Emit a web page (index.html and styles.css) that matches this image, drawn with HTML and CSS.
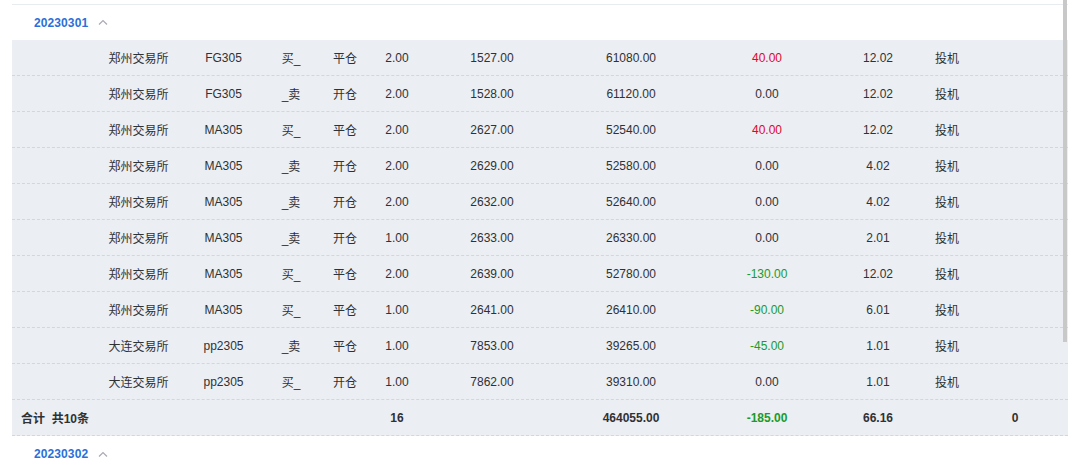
FILE: index.html
```html
<!DOCTYPE html>
<html lang="zh-CN">
<head>
<meta charset="utf-8">
<title>成交明细</title>
<link rel="stylesheet" href="styles.css">
</head>
<body>
<div class="page">
  <div class="panel">
    <div class="group-head first">
      <span class="date">20230301</span>
      <svg class="chev" width="10" height="6" viewBox="0 0 10 6"><path d="M1 5.5 L5 1.5 L9 5.5" fill="none" stroke="#a8abb2" stroke-width="1.2"/></svg>
    </div>
    <div class="table">
      <div class="row"><span></span><span>郑州交易所</span><span>FG305</span><span>买_</span><span>平仓</span><span>2.00</span><span>1527.00</span><span>61080.00</span><span class="red">40.00</span><span>12.02</span><span>投机</span><span></span></div>
      <div class="row"><span></span><span>郑州交易所</span><span>FG305</span><span>_卖</span><span>开仓</span><span>2.00</span><span>1528.00</span><span>61120.00</span><span>0.00</span><span>12.02</span><span>投机</span><span></span></div>
      <div class="row"><span></span><span>郑州交易所</span><span>MA305</span><span>买_</span><span>平仓</span><span>2.00</span><span>2627.00</span><span>52540.00</span><span class="red">40.00</span><span>12.02</span><span>投机</span><span></span></div>
      <div class="row"><span></span><span>郑州交易所</span><span>MA305</span><span>_卖</span><span>开仓</span><span>2.00</span><span>2629.00</span><span>52580.00</span><span>0.00</span><span>4.02</span><span>投机</span><span></span></div>
      <div class="row"><span></span><span>郑州交易所</span><span>MA305</span><span>_卖</span><span>开仓</span><span>2.00</span><span>2632.00</span><span>52640.00</span><span>0.00</span><span>4.02</span><span>投机</span><span></span></div>
      <div class="row"><span></span><span>郑州交易所</span><span>MA305</span><span>_卖</span><span>开仓</span><span>1.00</span><span>2633.00</span><span>26330.00</span><span>0.00</span><span>2.01</span><span>投机</span><span></span></div>
      <div class="row"><span></span><span>郑州交易所</span><span>MA305</span><span>买_</span><span>平仓</span><span>2.00</span><span>2639.00</span><span>52780.00</span><span class="green">-130.00</span><span>12.02</span><span>投机</span><span></span></div>
      <div class="row"><span></span><span>郑州交易所</span><span>MA305</span><span>买_</span><span>平仓</span><span>1.00</span><span>2641.00</span><span>26410.00</span><span class="green">-90.00</span><span>6.01</span><span>投机</span><span></span></div>
      <div class="row"><span></span><span>大连交易所</span><span>pp2305</span><span>_卖</span><span>平仓</span><span>1.00</span><span>7853.00</span><span>39265.00</span><span class="green">-45.00</span><span>1.01</span><span>投机</span><span></span></div>
      <div class="row"><span></span><span>大连交易所</span><span>pp2305</span><span>买_</span><span>开仓</span><span>1.00</span><span>7862.00</span><span>39310.00</span><span>0.00</span><span>1.01</span><span>投机</span><span></span></div>
      <div class="row total"><span class="total-label">合计&nbsp;&nbsp;共10条</span><span>16</span><span></span><span>464055.00</span><span class="green">-185.00</span><span>66.16</span><span></span><span>0</span></div>
    </div>
    <div class="group-head">
      <span class="date">20230302</span>
      <svg class="chev" width="10" height="6" viewBox="0 0 10 6"><path d="M1 5.5 L5 1.5 L9 5.5" fill="none" stroke="#a8abb2" stroke-width="1.2"/></svg>
    </div>
  </div>
  <div class="scrollbar"></div>
</div>
</body>
</html>
```
FILE: styles.css
```css
html, body {
  margin: 0;
  padding: 0;
  background: #ffffff;
}
body {
  font-family: "Liberation Sans", Arial, "Noto Sans CJK SC", sans-serif;
  font-size: 12px;
  color: #303133;
  overflow: hidden;
}
.page {
  position: relative;
  padding: 4px 8px 0 12px;
  height: 466px;
  overflow: hidden;
}
.panel {
  width: 1056px;
}
.group-head {
  height: 36px;
  display: flex;
  align-items: center;
  padding-left: 22px;
  gap: 10px;
  box-sizing: border-box;
}
.group-head.first {
  border-top: 1px solid #e8ebf0;
}
.date {
  color: #2b6fd8;
  font-weight: bold;
  font-size: 12px;
  letter-spacing: 0.1px;
}
.chev {
  display: block;
  margin-top: -1px;
}
.table {
  background: #ebeef3;
}
.row {
  display: grid;
  grid-template-columns: 84px 85px 85px 50px 58px 46px 144px 134px 138px 84px 54px 82px 12px;
  height: 36px;
  align-items: center;
  border-bottom: 1px dashed #d3d6db;
  box-sizing: border-box;
}
.row span {
  text-align: center;
  white-space: nowrap;
}
.red {
  color: #e0062a;
}
.green {
  color: #1a9b2a;
}
.total {
  grid-template-columns: 362px 46px 144px 134px 138px 84px 54px 82px 12px;
  font-weight: bold;
}
.total span.total-label {
  text-align: left;
  padding-left: 9px;
}
.scrollbar {
  position: absolute;
  left: 1063px;
  top: 0;
  width: 4px;
  height: 342px;
  background: #c8c8c8;
}
```
